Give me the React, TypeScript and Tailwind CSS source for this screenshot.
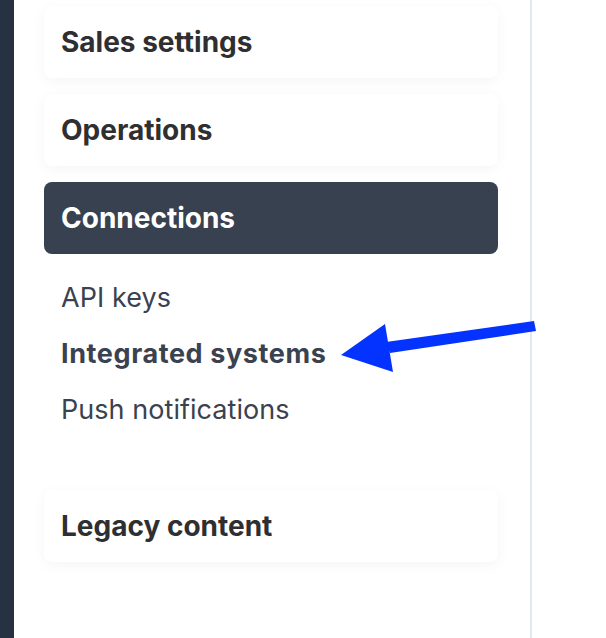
import React from 'react';

const font = { fontFamily: 'Inter, "Noto Sans", sans-serif' };

const SectionCard: React.FC<{ label: string; active?: boolean }> = ({ label, active }) => (
    <div
        className={`h-[72px] rounded-lg flex items-center pl-[17px] text-[28px] font-bold tracking-[0px] ${
            active
                ? 'bg-[#374150] text-white'
                : 'bg-white text-[#2f2f31] shadow-[0_3px_14px_rgba(0,0,0,0.045)]'
        }`}
    >
        {label}
    </div>
);

const SubLink: React.FC<{ label: string; current?: boolean }> = ({ label, current }) => (
    <div
        className={`h-[56px] flex items-center pl-[17px] text-[27px] text-[#3a4250] ${
            current ? 'font-bold tracking-[0.6px]' : 'font-normal tracking-[0.05px]'
        }`}
    >
        {label}
    </div>
);

// Annotation arrow drawn over the page
const Arrow: React.FC = () => (
    <svg className="absolute inset-0 pointer-events-none" width="606" height="638" viewBox="0 0 606 638">
        <polygon points="386,342 534,321 536,331 390,353" fill="#0433ff" />
        <polygon points="341,355 385,324 393,372" fill="#0433ff" />
    </svg>
);

export default function App() {
    return (
        <div className="relative w-[606px] h-[638px] bg-white flex overflow-hidden" style={font}>
            {/* Dark app rail */}
            <div className="w-[14px] shrink-0 bg-[#263241]" />

            {/* Settings nav */}
            <div className="w-[518px] shrink-0 border-r-2 border-[#e3e7ef] pt-[6px] pl-[30px] pr-[32px]">
                <div className="flex flex-col gap-4">
                    <SectionCard label="Sales settings" />
                    <SectionCard label="Operations" />
                    <SectionCard label="Connections" active />
                </div>

                <div className="pt-4 pb-[52px]">
                    <SubLink label="API keys" />
                    <SubLink label="Integrated systems" current />
                    <SubLink label="Push notifications" />
                </div>

                <SectionCard label="Legacy content" />
            </div>

            <div className="flex-1 bg-white" />

            <Arrow />
        </div>
    );
}
